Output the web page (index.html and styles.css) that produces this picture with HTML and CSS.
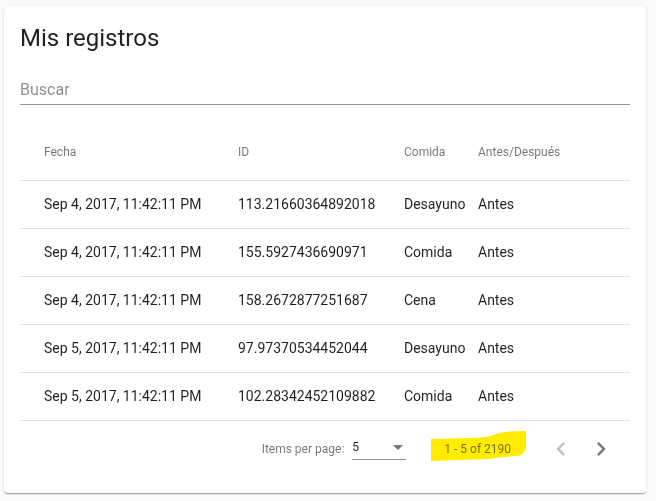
FILE: index.html
```html
<!DOCTYPE html>
<html lang="es">
<head>
<meta charset="utf-8">
<title>Mis registros</title>
<link rel="stylesheet" href="styles.css">
</head>
<body>
<div class="card">
  <h1 class="title">Mis registros</h1>
  <div class="search">
    <input class="search-input" type="text" placeholder="Buscar">
  </div>
  <div class="table">
    <div class="row header">
      <div class="cell">Fecha</div>
      <div class="cell">ID</div>
      <div class="cell">Comida</div>
      <div class="cell">Antes/Después</div>
    </div>
    <div class="row">
      <div class="cell">Sep 4, 2017, 11:42:11 PM</div>
      <div class="cell">113.21660364892018</div>
      <div class="cell">Desayuno</div>
      <div class="cell">Antes</div>
    </div>
    <div class="row">
      <div class="cell">Sep 4, 2017, 11:42:11 PM</div>
      <div class="cell">155.5927436690971</div>
      <div class="cell">Comida</div>
      <div class="cell">Antes</div>
    </div>
    <div class="row">
      <div class="cell">Sep 4, 2017, 11:42:11 PM</div>
      <div class="cell">158.2672877251687</div>
      <div class="cell">Cena</div>
      <div class="cell">Antes</div>
    </div>
    <div class="row">
      <div class="cell">Sep 5, 2017, 11:42:11 PM</div>
      <div class="cell">97.97370534452044</div>
      <div class="cell">Desayuno</div>
      <div class="cell">Antes</div>
    </div>
    <div class="row">
      <div class="cell">Sep 5, 2017, 11:42:11 PM</div>
      <div class="cell">102.28342452109882</div>
      <div class="cell">Comida</div>
      <div class="cell">Antes</div>
    </div>
  </div>
  <div class="paginator">
    <span class="page-size-label">Items per page:</span>
    <div class="page-size-select">
      <span class="page-size-value">5</span>
      <span class="select-arrow"></span>
    </div>
    <span class="range-label">
      <svg class="highlight" width="96" height="31" viewBox="0 0 96 31" aria-hidden="true">
        <path d="M0 8 L38 7 Q58 7 65 3 Q71 0 95 0 L95 17 Q93 24 86 25 Q70 26 58 28 L0 30 Z" fill="#ffec00"/>
      </svg>
      1 - 5 of 2190
    </span>
    <button class="nav-btn disabled" aria-label="Previous page">
      <svg width="28" height="28" viewBox="0 0 24 24"><path d="M15.41 7.41L14 6l-6 6 6 6 1.41-1.41L10.83 12z" fill="currentColor"/></svg>
    </button>
    <button class="nav-btn" aria-label="Next page">
      <svg width="28" height="28" viewBox="0 0 24 24"><path d="M10 6L8.59 7.41 13.17 12l-4.58 4.59L10 18l6-6z" fill="currentColor"/></svg>
    </button>
  </div>
</div>
</body>
</html>
```

FILE: styles.css
```css
* { box-sizing: border-box; }

html, body {
  margin: 0;
  background: #fafafa;
}

body {
  padding: 6px 10px 8px 4px;
  font-family: Roboto, "Liberation Sans", Arial, sans-serif;
  color: rgba(0, 0, 0, 0.87);
}

.card {
  width: 642px;
  background: #fff;
  border-radius: 4px;
  padding: 16px;
  box-shadow: 0 2px 1px -1px rgba(0,0,0,.2), 0 1px 1px 0 rgba(0,0,0,.14), 0 1px 3px 0 rgba(0,0,0,.12);
}

.title {
  margin: 0;
  font-size: 24px;
  line-height: 32px;
  font-weight: 400;
  color: rgba(0, 0, 0, 0.87);
}

.search {
  height: 51px;
  display: flex;
  align-items: flex-end;
  padding-bottom: 4px;
  border-bottom: 1px solid rgba(0, 0, 0, 0.42);
}

.search-input {
  width: 100%;
  border: none;
  outline: none;
  padding: 0;
  margin: 0;
  background: transparent;
  font-family: Roboto, "Liberation Sans", Arial, sans-serif;
  font-size: 16px;
  line-height: 20px;
  height: 20px;
  color: rgba(0, 0, 0, 0.87);
}

.search-input::placeholder {
  color: rgba(0, 0, 0, 0.45);
}

.table {
  margin-top: 20px;
}

.row {
  display: grid;
  grid-template-columns: 218px 166px 74px 1fr;
  align-items: center;
  height: 48px;
  border-bottom: 1px solid rgba(0, 0, 0, 0.12);
  font-size: 14px;
  line-height: 16px;
  padding-bottom: 1px;
}

.row .cell:first-child {
  padding-left: 24px;
}

.cell {
  white-space: nowrap;
}

.row.header {
  height: 56px;
  font-size: 12px;
  color: rgba(0, 0, 0, 0.54);
}

.paginator {
  height: 56px;
  display: flex;
  align-items: center;
  justify-content: flex-end;
  padding-right: 9px;
  font-size: 12px;
  color: rgba(0, 0, 0, 0.54);
}

.page-size-label {
  margin-right: 8px;
}

.page-size-select {
  width: 54px;
  height: 21px;
  margin-top: 1px;
  display: flex;
  align-items: flex-start;
  justify-content: space-between;
  padding-bottom: 4px;
  border-bottom: 1px solid rgba(0, 0, 0, 0.42);
  color: rgba(0, 0, 0, 0.87);
  line-height: 16px;
}

.select-arrow {
  width: 0;
  height: 0;
  margin: 6px 3px 0 0;
  border-left: 5px solid transparent;
  border-right: 5px solid transparent;
  border-top: 5px solid rgba(0, 0, 0, 0.54);
}

.range-label {
  position: relative;
  margin: 0 30px 0 38px;
  line-height: 16px;
}

.highlight {
  position: absolute;
  left: -13px;
  top: -10px;
  mix-blend-mode: multiply;
}

.nav-btn {
  width: 40px;
  height: 40px;
  padding: 0;
  border: none;
  background: transparent;
  display: flex;
  align-items: center;
  justify-content: center;
  color: rgba(0, 0, 0, 0.54);
}

.nav-btn.disabled {
  color: rgba(0, 0, 0, 0.26);
}
```
